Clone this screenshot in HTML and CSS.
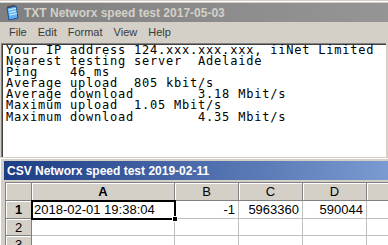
FILE: index.html
```html
<!DOCTYPE html>
<html lang="en">
<head>
    <meta charset="UTF-8">
    <title>Networx speed tests</title>
    <link rel="stylesheet" href="styles.css">
</head>
<body>
    <div class="win txt-win">
        <div class="title inactive">
            <svg class="app-icon" width="16" height="16" viewBox="0 0 16 16">
                <path d="M3 3 L12 1 L14 13 L5 15 Z" fill="#5fb4f0" stroke="#1d4f9c" stroke-width="1"/>
                <path d="M4.5 5 L12 3.4 M5 7.5 L12.5 6 M5.5 10 L13 8.5" stroke="#dff2ff" stroke-width="1"/>
                <path d="M4 3 L4 1 M6 2.5 L6 0.5 M8 2 L8 0 M10 1.6 L10 0" stroke="#333" stroke-width="1"/>
            </svg>
            <span>TXT Networx speed test 2017-05-03</span>
        </div>
        <div class="menu">
            <span>File</span><span>Edit</span><span>Format</span><span>View</span><span>Help</span>
        </div>
        <div class="edit-outer">
<pre class="edit">Your IP address 124.xxx.xxx.xxx, iiNet Limited
Nearest testing server  Adelaide
Ping    46 ms
Average upload  805 kbit/s
Average download        3.18 Mbit/s
Maximum upload  1.05 Mbit/s
Maximum download        4.35 Mbit/s</pre>
        </div>
    </div>
    <div class="win csv-win">
        <div class="title active">CSV Networx speed test 2019-02-11</div>
        <table class="sheet">
            <colgroup>
                <col class="c-rh"><col class="c-a"><col class="c-n"><col class="c-n"><col class="c-n"><col>
            </colgroup>
            <tr class="head">
                <th class="corner"></th><th class="sel">A</th><th>B</th><th>C</th><th>D</th><th></th>
            </tr>
            <tr class="r1">
                <th class="sel">1</th><td class="active-cell">2018-02-01 19:38:04</td><td class="num">-1</td><td class="num">5963360</td><td class="num">590044</td><td></td>
            </tr>
            <tr class="r2">
                <th>2</th><td></td><td></td><td></td><td></td><td></td>
            </tr>
            <tr class="r3">
                <th>3</th><td></td><td></td><td></td><td></td><td></td>
            </tr>
        </table>
    </div>
</body>
</html>
```

FILE: styles.css
```css
body { margin: 0; width: 388px; height: 245px; overflow: hidden; background: #d4d0c8; font-family: "Liberation Sans", Arial, sans-serif; }
.win { background: #d4d0c8; }
.txt-win { height: 157px; padding-top: 3px; box-sizing: border-box; border-top: 1px solid #d4d0c8; box-shadow: inset 0 1px 0 #fff; overflow: hidden; }
.title { height: 19px; display: flex; align-items: center; font-size: 12px; font-weight: bold; white-space: nowrap; }
.title.inactive { gap: 4px; padding-left: 4px; margin-top: -1px; background: linear-gradient(90deg, #808080, #959595); color: #d4d0c8; }
.title.active { padding-left: 3px; background: linear-gradient(90deg, #1c3c84, #7b9bd2); color: #fff; }
.app-icon { flex: none; }
.menu { height: 20px; display: flex; align-items: center; gap: 11px; padding-left: 9px; font-size: 11px; color: #3a3a3a; }
.edit-outer { margin: 1px 2px 0 1px; border-top: 1px solid #808080; border-left: 1px solid #808080; }
.edit { margin: 0; height: 120px; padding: 0 0 0 3px; background: #fff; border-top: 1px solid #404040; border-left: 1px solid #404040; font-family: "DejaVu Sans Mono", monospace; font-size: 12px; letter-spacing: 0.78px; line-height: 11.1px; color: #000; }
.csv-win { height: 88px; padding: 3px 0 0 4px; border-top: 1px solid #d4d0c8; box-shadow: inset 1px 1px 0 #fff; box-sizing: border-box; }
.csv-win .title { margin-right: -4px; }
.sheet { margin: 2px 0 0 1px; border-collapse: collapse; table-layout: fixed; width: 420px; font-size: 13px; border-left: 1px solid #808080; border-top: 1px solid #808080; background: #fff; }
.c-rh { width: 26px; }
.c-a { width: 143px; }
.c-n { width: 64px; }
.sheet th { background: #d4d0c8; font-weight: normal; padding: 0; text-align: center; border-right: 1px solid #808080; border-bottom: 1px solid #808080; box-shadow: inset 1px 1px 0 #fff; }
.sheet th.sel { font-weight: bold; }
.sheet td { padding: 0 3px 0 2px; border-right: 1px solid #c0c0c0; border-bottom: 1px solid #c0c0c0; white-space: nowrap; }
.sheet .num { text-align: right; }
.head { height: 18px; }
.r1 { height: 18px; }
.r2 { height: 17px; }
.r3 { height: 17px; }
.active-cell { position: relative; }
.active-cell::after { content: ""; position: absolute; left: -1px; top: -1px; right: -2px; bottom: -2px; border: 2px solid #000; }
.active-cell::before { content: ""; position: absolute; right: -4px; bottom: -4px; width: 4px; height: 4px; background: #000; border: 1px solid #fff; z-index: 1; }
```
